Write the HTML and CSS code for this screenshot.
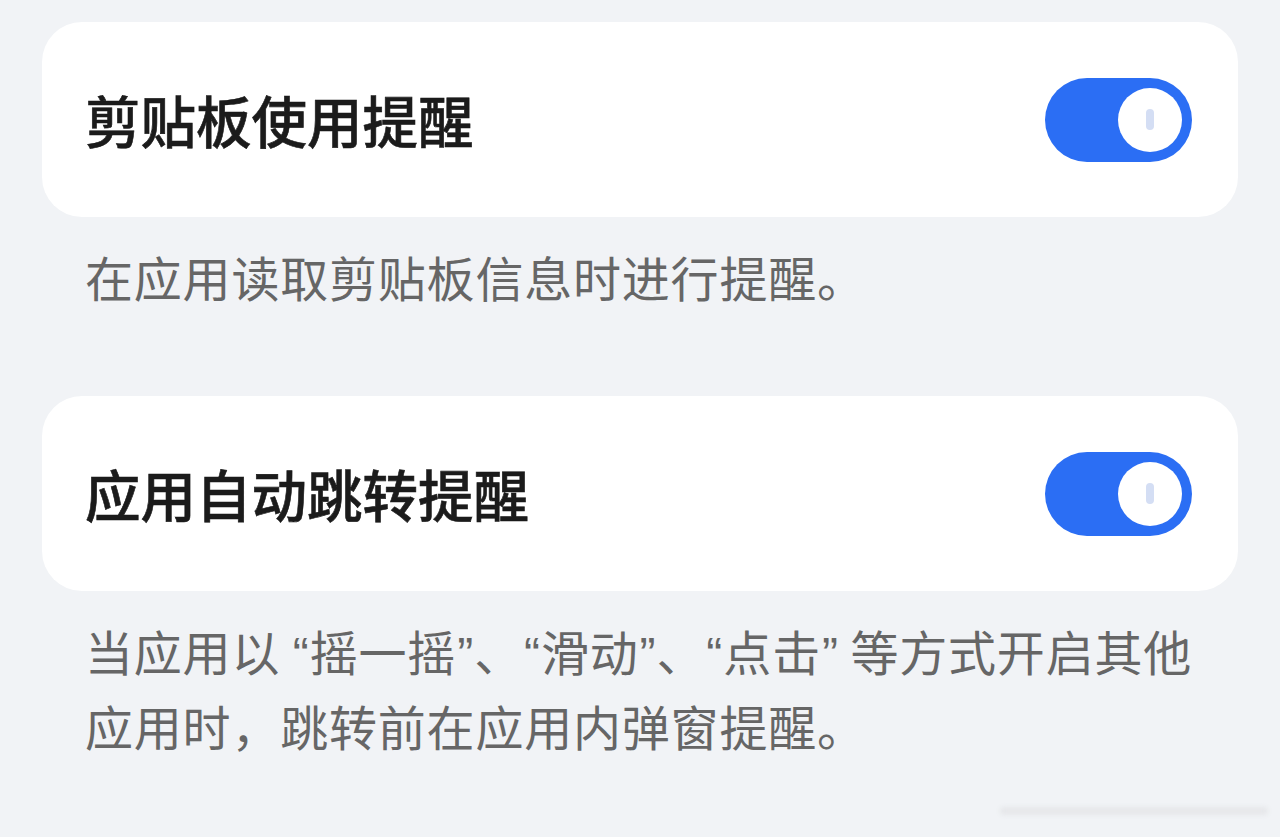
FILE: index.html
```html
<!DOCTYPE html>
<html lang="zh">
<head>
<meta charset="utf-8">
<link rel="stylesheet" href="styles.css">
</head>
<body>
<main class="page">
  <section class="card">
    <span class="title">剪贴板使用提醒</span>
    <span class="switch"><span class="knob"><span class="mark"></span></span></span>
  </section>
  <p class="desc"><span class="line">在应用读取剪贴板信息时进行提醒。</span></p>
  <section class="card">
    <span class="title">应用自动跳转提醒</span>
    <span class="switch"><span class="knob"><span class="mark"></span></span></span>
  </section>
  <p class="desc"><span class="line">当应用以 <span class="q">“</span>摇一摇<span class="q">”</span>、<span class="q">“</span>滑动<span class="q">”</span>、<span class="q">“</span>点击<span class="q">”</span> 等方式开启其他</span><span class="line">应用时，跳转前在应用内弹窗提醒。</span></p>
</main>
<div class="watermark"></div>
</body>
</html>
```
FILE: styles.css
```css
html, body {
  margin: 0;
  padding: 0;
  background: #f1f3f6;
}
body {
  width: 1280px;
  height: 837px;
  overflow: hidden;
  position: relative;
  font-family: "Noto Sans CJK SC", "Noto Sans", sans-serif;
}
.page {
  padding: 22px 42px 0 42px;
}
.card {
  background: #ffffff;
  border-radius: 40px;
  height: 195px;
  box-sizing: border-box;
  padding: 0 46px 0 43px;
  display: flex;
  align-items: center;
  justify-content: space-between;
}
.title {
  font-size: 55.5px;
  font-weight: 500;
  color: #1b1b1b;
  line-height: 1;
  -webkit-text-stroke: 0.6px #1b1b1b;
}
.switch {
  width: 147px;
  height: 84px;
  border-radius: 42px;
  background: #2b6ef4;
  display: flex;
  align-items: center;
  justify-content: flex-end;
  padding-right: 10px;
  box-sizing: border-box;
}
.knob {
  width: 64px;
  height: 64px;
  border-radius: 50%;
  background: #ffffff;
  display: flex;
  align-items: center;
  justify-content: center;
}
.mark {
  width: 8px;
  height: 21px;
  border-radius: 4px;
  background: #d4def4;
}
.desc {
  margin: 0;
  padding: 24px 0 85px 43px;
  font-size: 48px;
  letter-spacing: 0.8px;
  line-height: 70px;
  color: #666666;
  text-spacing-trim: space-all;
}
.line {
  display: block;
  white-space: nowrap;
}
.q {
  font-family: "Liberation Sans", sans-serif;
  letter-spacing: 0;
  margin: 0 1px;
}
.watermark {
  position: absolute;
  left: 1000px;
  top: 807px;
  width: 268px;
  height: 8px;
  border-radius: 4px;
  background: #e6e7ea;
  filter: blur(2px);
}
```
